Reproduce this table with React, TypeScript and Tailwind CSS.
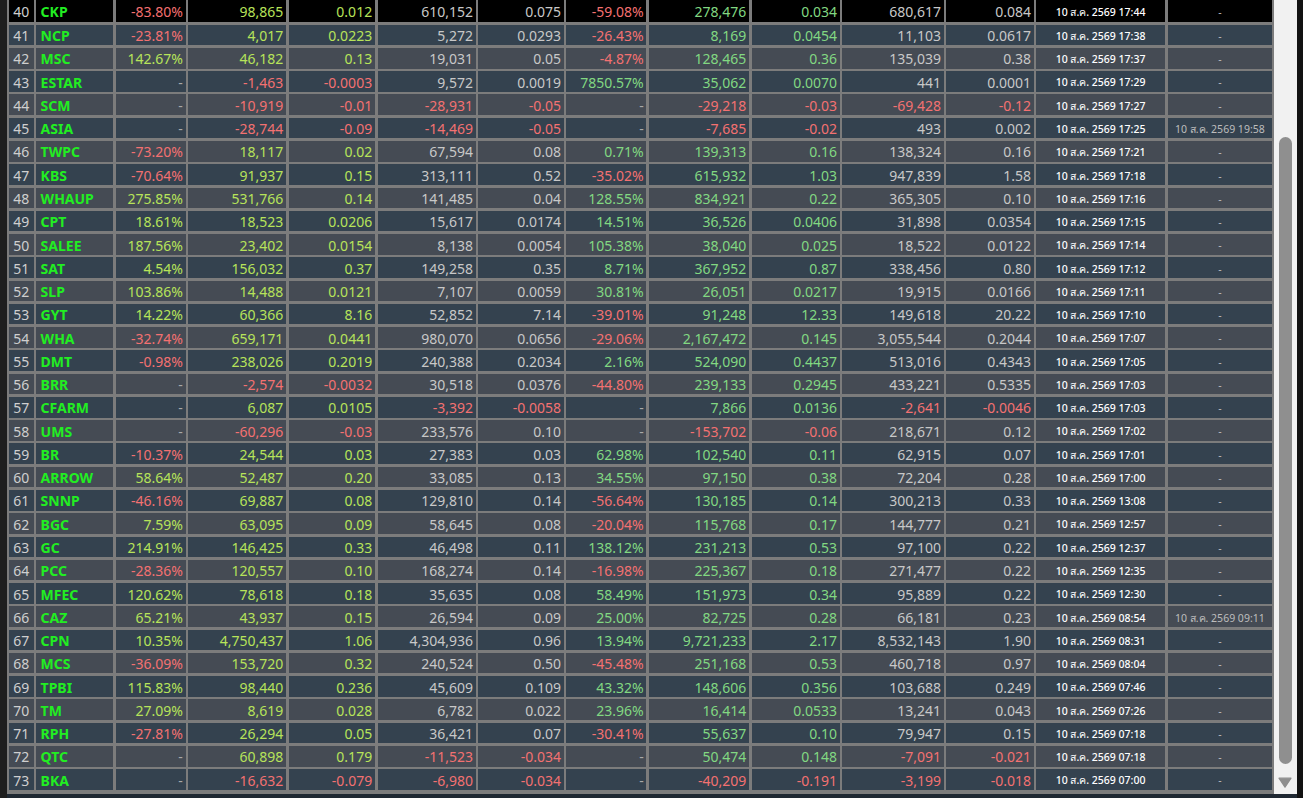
import React from "react";

type Row = [string, string, string, string, string, string, string, string, string, string, string, string, string, string];

const rows: Row[] = [
  ["40", "CKP", "-83.80%", "98,865", "0.012", "610,152", "0.075", "-59.08%", "278,476", "0.034", "680,617", "0.084", "17:44", "-"],
  ["41", "NCP", "-23.81%", "4,017", "0.0223", "5,272", "0.0293", "-26.43%", "8,169", "0.0454", "11,103", "0.0617", "17:38", "-"],
  ["42", "MSC", "142.67%", "46,182", "0.13", "19,031", "0.05", "-4.87%", "128,465", "0.36", "135,039", "0.38", "17:37", "-"],
  ["43", "ESTAR", "-", "-1,463", "-0.0003", "9,572", "0.0019", "7850.57%", "35,062", "0.0070", "441", "0.0001", "17:29", "-"],
  ["44", "SCM", "-", "-10,919", "-0.01", "-28,931", "-0.05", "-", "-29,218", "-0.03", "-69,428", "-0.12", "17:27", "-"],
  ["45", "ASIA", "-", "-28,744", "-0.09", "-14,469", "-0.05", "-", "-7,685", "-0.02", "493", "0.002", "17:25", "19:58"],
  ["46", "TWPC", "-73.20%", "18,117", "0.02", "67,594", "0.08", "0.71%", "139,313", "0.16", "138,324", "0.16", "17:21", "-"],
  ["47", "KBS", "-70.64%", "91,937", "0.15", "313,111", "0.52", "-35.02%", "615,932", "1.03", "947,839", "1.58", "17:18", "-"],
  ["48", "WHAUP", "275.85%", "531,766", "0.14", "141,485", "0.04", "128.55%", "834,921", "0.22", "365,305", "0.10", "17:16", "-"],
  ["49", "CPT", "18.61%", "18,523", "0.0206", "15,617", "0.0174", "14.51%", "36,526", "0.0406", "31,898", "0.0354", "17:15", "-"],
  ["50", "SALEE", "187.56%", "23,402", "0.0154", "8,138", "0.0054", "105.38%", "38,040", "0.025", "18,522", "0.0122", "17:14", "-"],
  ["51", "SAT", "4.54%", "156,032", "0.37", "149,258", "0.35", "8.71%", "367,952", "0.87", "338,456", "0.80", "17:12", "-"],
  ["52", "SLP", "103.86%", "14,488", "0.0121", "7,107", "0.0059", "30.81%", "26,051", "0.0217", "19,915", "0.0166", "17:11", "-"],
  ["53", "GYT", "14.22%", "60,366", "8.16", "52,852", "7.14", "-39.01%", "91,248", "12.33", "149,618", "20.22", "17:10", "-"],
  ["54", "WHA", "-32.74%", "659,171", "0.0441", "980,070", "0.0656", "-29.06%", "2,167,472", "0.145", "3,055,544", "0.2044", "17:07", "-"],
  ["55", "DMT", "-0.98%", "238,026", "0.2019", "240,388", "0.2034", "2.16%", "524,090", "0.4437", "513,016", "0.4343", "17:05", "-"],
  ["56", "BRR", "-", "-2,574", "-0.0032", "30,518", "0.0376", "-44.80%", "239,133", "0.2945", "433,221", "0.5335", "17:03", "-"],
  ["57", "CFARM", "-", "6,087", "0.0105", "-3,392", "-0.0058", "-", "7,866", "0.0136", "-2,641", "-0.0046", "17:03", "-"],
  ["58", "UMS", "-", "-60,296", "-0.03", "233,576", "0.10", "-", "-153,702", "-0.06", "218,671", "0.12", "17:02", "-"],
  ["59", "BR", "-10.37%", "24,544", "0.03", "27,383", "0.03", "62.98%", "102,540", "0.11", "62,915", "0.07", "17:01", "-"],
  ["60", "ARROW", "58.64%", "52,487", "0.20", "33,085", "0.13", "34.55%", "97,150", "0.38", "72,204", "0.28", "17:00", "-"],
  ["61", "SNNP", "-46.16%", "69,887", "0.08", "129,810", "0.14", "-56.64%", "130,185", "0.14", "300,213", "0.33", "13:08", "-"],
  ["62", "BGC", "7.59%", "63,095", "0.09", "58,645", "0.08", "-20.04%", "115,768", "0.17", "144,777", "0.21", "12:57", "-"],
  ["63", "GC", "214.91%", "146,425", "0.33", "46,498", "0.11", "138.12%", "231,213", "0.53", "97,100", "0.22", "12:37", "-"],
  ["64", "PCC", "-28.36%", "120,557", "0.10", "168,274", "0.14", "-16.98%", "225,367", "0.18", "271,477", "0.22", "12:35", "-"],
  ["65", "MFEC", "120.62%", "78,618", "0.18", "35,635", "0.08", "58.49%", "151,973", "0.34", "95,889", "0.22", "12:30", "-"],
  ["66", "CAZ", "65.21%", "43,937", "0.15", "26,594", "0.09", "25.00%", "82,725", "0.28", "66,181", "0.23", "08:54", "09:11"],
  ["67", "CPN", "10.35%", "4,750,437", "1.06", "4,304,936", "0.96", "13.94%", "9,721,233", "2.17", "8,532,143", "1.90", "08:31", "-"],
  ["68", "MCS", "-36.09%", "153,720", "0.32", "240,524", "0.50", "-45.48%", "251,168", "0.53", "460,718", "0.97", "08:04", "-"],
  ["69", "TPBI", "115.83%", "98,440", "0.236", "45,609", "0.109", "43.32%", "148,606", "0.356", "103,688", "0.249", "07:46", "-"],
  ["70", "TM", "27.09%", "8,619", "0.028", "6,782", "0.022", "23.96%", "16,414", "0.0533", "13,241", "0.043", "07:26", "-"],
  ["71", "RPH", "-27.81%", "26,294", "0.05", "36,421", "0.07", "-30.41%", "55,637", "0.10", "79,947", "0.15", "07:18", "-"],
  ["72", "QTC", "-", "60,898", "0.179", "-11,523", "-0.034", "-", "50,474", "0.148", "-7,091", "-0.021", "07:18", "-"],
  ["73", "BKA", "-", "-16,632", "-0.079", "-6,980", "-0.034", "-", "-40,209", "-0.191", "-3,199", "-0.018", "07:00", "-"],
];

const RED = "text-[#f37171]";
const YG = "text-[#b7e35a]";
const GR = "text-[#82d882]";
const GY = "text-[#c8c8c8]";
const DASH = "text-[#a9a9a9]";

// positive colour for each data column index 2..11
const posColor: Record<number, string> = {
  2: YG,
  3: YG,
  4: YG,
  5: GY,
  6: GY,
  7: GR,
  8: GR,
  9: GR,
  10: GY,
  11: GY,
};

function colorFor(v: string, idx: number) {
  if (v === "-") return DASH;
  if (v.startsWith("-")) return RED;
  return posColor[idx];
}

const COLS =
  "grid grid-cols-[24.3px_77px_69.6px_97.7px_86.3px_98.3px_85.3px_80px_100px_88px_101.3px_87.3px_128.6px_104.7px] gap-x-[2.67px]";

const DATE_PREFIX = "10 ส.ค. 2569 ";

function TableRow({ r, i }: { r: Row; i: number }) {
  const num = parseInt(r[0], 10);
  const bg = i === 0 ? "bg-black" : num % 2 === 1 ? "bg-[#34424f]" : "bg-[#454b54]";
  const h = i === 0 ? "h-[22px]" : "h-[20.62px]";
  const cell = `${bg} flex items-center overflow-hidden whitespace-nowrap pt-[2.4px] leading-none`;
  return (
    <div className={`${COLS} ${h}`}>
      <div className={`${cell} pl-[4px] text-[14px] text-[#cfcfcf]`}>{r[0]}</div>
      <div className={`${cell} pl-[4.3px] text-[14px] font-bold text-[#22ee22]`}>{r[1]}</div>
      {[2, 3, 4, 5, 6, 7, 8, 9, 10, 11].map((k) => (
        <div key={k} className={`${cell} justify-end pr-[2.7px] text-[14px] ${colorFor(r[k], k)}`}>
          {r[k]}
        </div>
      ))}
      <div className={`${cell} justify-center text-[10.5px] font-medium text-white`}>{DATE_PREFIX + r[12]}</div>
      <div className={`${cell} justify-center text-[10.5px] text-[#bdbdbd]`}>
        {r[13] === "-" ? "-" : DATE_PREFIX + r[13]}
      </div>
    </div>
  );
}

function Scrollbar() {
  return (
    <div className="flex w-[22.7px] shrink-0 flex-col items-center bg-[#f1f1f1]">
      <div className="h-[136.7px] shrink-0" />
      <div className="h-[627.3px] w-[12.4px] shrink-0 rounded-full bg-[#8f8f8f]" />
      <div className="h-[12.7px] shrink-0" />
      <svg width="14" height="11" viewBox="0 0 14 11" className="shrink-0">
        <path d="M1 1.2 L13 1.2 L7 10.2 Z" fill="#8f8f8f" stroke="#8f8f8f" strokeWidth="1.2" strokeLinejoin="round" />
      </svg>
    </div>
  );
}

export default function App() {
  return (
    <div className="flex h-[798px] w-[1303px] overflow-hidden bg-[#1e1e1e] font-['Noto_Sans','Open_Sans',sans-serif]">
      <div className="w-[6.7px] shrink-0" />
      <div className="flex w-[1290px] shrink-0 flex-col">
        <div className="flex h-[793.5px] shrink-0">
          <div className="w-[1267.3px] shrink-0 overflow-hidden bg-[#7c7c7c] pl-[2.67px]">
            <div className="flex flex-col gap-y-[2.67px]">
              {rows.map((r, i) => (
                <TableRow key={r[0]} r={r} i={i} />
              ))}
            </div>
          </div>
          <Scrollbar />
        </div>
        <div className="flex-1 bg-[#1f2832]" />
      </div>
      <div className="flex-1 bg-[#121212]" />
    </div>
  );
}
